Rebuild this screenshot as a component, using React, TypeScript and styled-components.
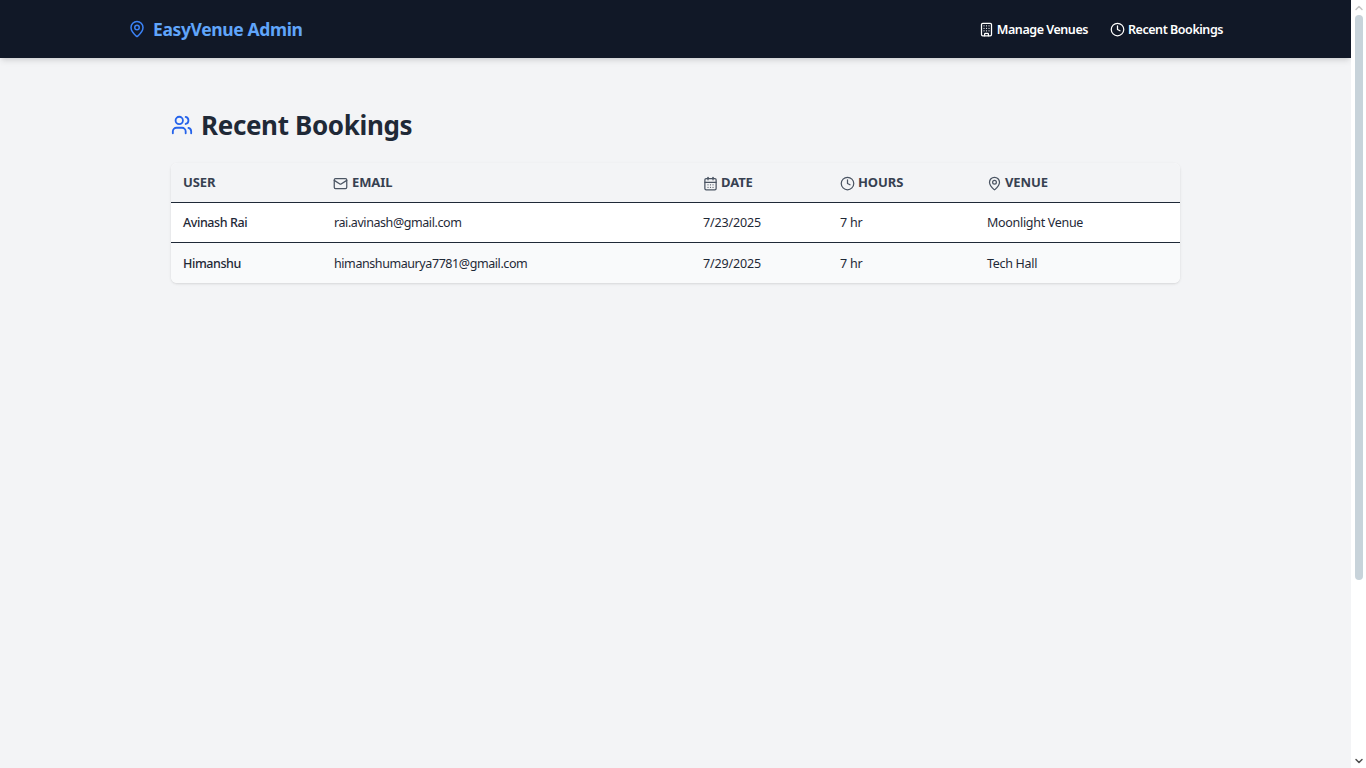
import * as React from 'react'
import styled, { createGlobalStyle } from 'styled-components'
import { MapPin, Building, Clock, Users, Mail, CalendarDays, ChevronUp, ChevronDown } from 'lucide-react'

const GlobalStyle = createGlobalStyle`
html, body {
  margin: 0;
  padding: 0;
  height: 100%;
  overflow: hidden;
  background: #ffffff;
  font-family: "Noto Sans", "Open Sans", "Liberation Sans", sans-serif;
}
* {
  box-sizing: border-box;
}
`;

const Shell = styled.div`
height: 768px;
display: flex;
`;

const Page = styled.div`
flex: 1;
min-width: 0;
background: #f3f4f6;
`;

const ScrollTrack = styled.div`
flex: none;
width: 15px;
display: flex;
flex-direction: column;
background: #ffffff;
`;

const ScrollButton = styled.div<{ $active?: boolean }>`
flex: none;
height: 15px;
display: flex;
align-items: center;
justify-content: center;
color: ${p => (p.$active ? '#505050' : '#c4c4c4')};
`;

const ScrollRail = styled.div`
flex: 1;
padding: 0 3px 0 4px;
`;

const ScrollThumb = styled.div`
height: 565px;
background: #c8d3da;
border-radius: 4px;
`;

const NavBar = styled.nav`
height: 58px;
background: #111827;
box-shadow: 0 4px 6px -1px rgba(0, 0, 0, 0.1), 0 2px 4px -2px rgba(0, 0, 0, 0.1);
padding: 0 128px;
display: flex;
align-items: center;
justify-content: space-between;
`;

const Brand = styled.div`
display: flex;
align-items: center;
gap: 7px;
color: #60a5fa;
font-size: 17.5px;
font-weight: 700;
letter-spacing: -0.37px;
svg {
  color: #3b82f6;
}
`;

const NavLinks = styled.div`
display: flex;
align-items: center;
gap: 22px;
`;

const NavLink = styled.a`
display: flex;
align-items: center;
gap: 3px;
color: #ffffff;
font-size: 12.5px;
font-weight: 600;
letter-spacing: -0.45px;
`;

const Main = styled.main`
width: 1009px;
margin: 0 auto;
padding-top: 47px;
`;

const Title = styled.h1`
margin: 0 0 18px;
height: 40px;
display: flex;
align-items: center;
gap: 8px;
color: #1f2937;
font-size: 26px;
font-weight: 700;
letter-spacing: -0.35px;
svg {
  color: #2563eb;
}
`;

const Card = styled.div`
background: #ffffff;
border-radius: 6px;
overflow: hidden;
box-shadow: 0 1px 3px 0 rgba(0, 0, 0, 0.1), 0 1px 2px -1px rgba(0, 0, 0, 0.1);
`;

const Table = styled.table`
width: 100%;
border-collapse: collapse;
table-layout: fixed;
`;

const HeadRow = styled.tr`
height: 39px;
background: #f3f4f6;
border-bottom: 1px solid #1f2937;
`;

const HeadCell = styled.th`
padding: 0 12px;
text-align: left;
color: #374151;
font-size: 13px;
font-weight: 700;
letter-spacing: -0.1px;
`;

const HeadLabel = styled.span<{ $nudge?: boolean }>`
display: flex;
align-items: center;
gap: ${p => (p.$nudge ? 4 : 3)}px;
svg {
  margin-left: ${p => (p.$nudge ? -1 : 0)}px;
  margin-top: 2px;
  color: #4b5563;
}
`;

const Row = styled.tr<{ $alt?: boolean; $last?: boolean }>`
height: ${p => (p.$last ? 41 : 40)}px;
background: ${p => (p.$alt ? '#f9fafb' : '#ffffff')};
border-bottom: ${p => (p.$last ? 'none' : '1px solid #1f2937')};
td {
  padding-top: ${p => (p.$last ? 2 : 0)}px;
}
`;

const Cell = styled.td<{ $strong?: boolean; $spacing?: number }>`
padding: 0 12px;
color: #1f2937;
font-size: 12.5px;
font-weight: ${p => (p.$strong ? 500 : 400)};
letter-spacing: ${p => p.$spacing ?? -0.42}px;
white-space: nowrap;
`;

const bookings = [
  { user: 'Avinash Rai', email: 'rai.avinash@gmail.com', date: '7/23/2025', hours: '7 hr', venue: 'Moonlight Venue' },
  { user: 'Himanshu', email: 'himanshumaurya7781@gmail.com', date: '7/29/2025', hours: '7 hr', venue: 'Tech Hall' },
]

export default function App() {
  return (
    <Shell>
      <GlobalStyle />
      <Page>
        <NavBar>
          <Brand>
            <MapPin size={18} />
            EasyVenue Admin
          </Brand>
          <NavLinks>
            <NavLink><Building size={15} />Manage Venues</NavLink>
            <NavLink><Clock size={15} />Recent Bookings</NavLink>
          </NavLinks>
        </NavBar>
        <Main>
          <Title>
            <Users size={22} />
            Recent Bookings
          </Title>
          <Card>
            <Table>
              <colgroup>
                <col width={151} />
                <col width={369} />
                <col width={137} />
                <col width={147} />
                <col />
              </colgroup>
              <thead>
                <HeadRow>
                  <HeadCell>USER</HeadCell>
                  <HeadCell><HeadLabel $nudge><Mail size={15} />EMAIL</HeadLabel></HeadCell>
                  <HeadCell><HeadLabel><CalendarDays size={15} />DATE</HeadLabel></HeadCell>
                  <HeadCell><HeadLabel><Clock size={15} />HOURS</HeadLabel></HeadCell>
                  <HeadCell><HeadLabel><MapPin size={15} />VENUE</HeadLabel></HeadCell>
                </HeadRow>
              </thead>
              <tbody>
                {bookings.map((b, i) => (
                  <Row key={b.email} $alt={i % 2 === 1} $last={i === bookings.length - 1}>
                    <Cell $strong>{b.user}</Cell>
                    <Cell>{b.email}</Cell>
                    <Cell $spacing={-0.15}>{b.date}</Cell>
                    <Cell $spacing={-0.2}>{b.hours}</Cell>
                    <Cell $spacing={-0.3}>{b.venue}</Cell>
                  </Row>
                ))}
              </tbody>
            </Table>
          </Card>
        </Main>
      </Page>
      <ScrollTrack>
        <ScrollButton><ChevronUp size={12} strokeWidth={3} /></ScrollButton>
        <ScrollRail><ScrollThumb /></ScrollRail>
        <ScrollButton $active><ChevronDown size={12} strokeWidth={3} /></ScrollButton>
      </ScrollTrack>
    </Shell>
  )
}
